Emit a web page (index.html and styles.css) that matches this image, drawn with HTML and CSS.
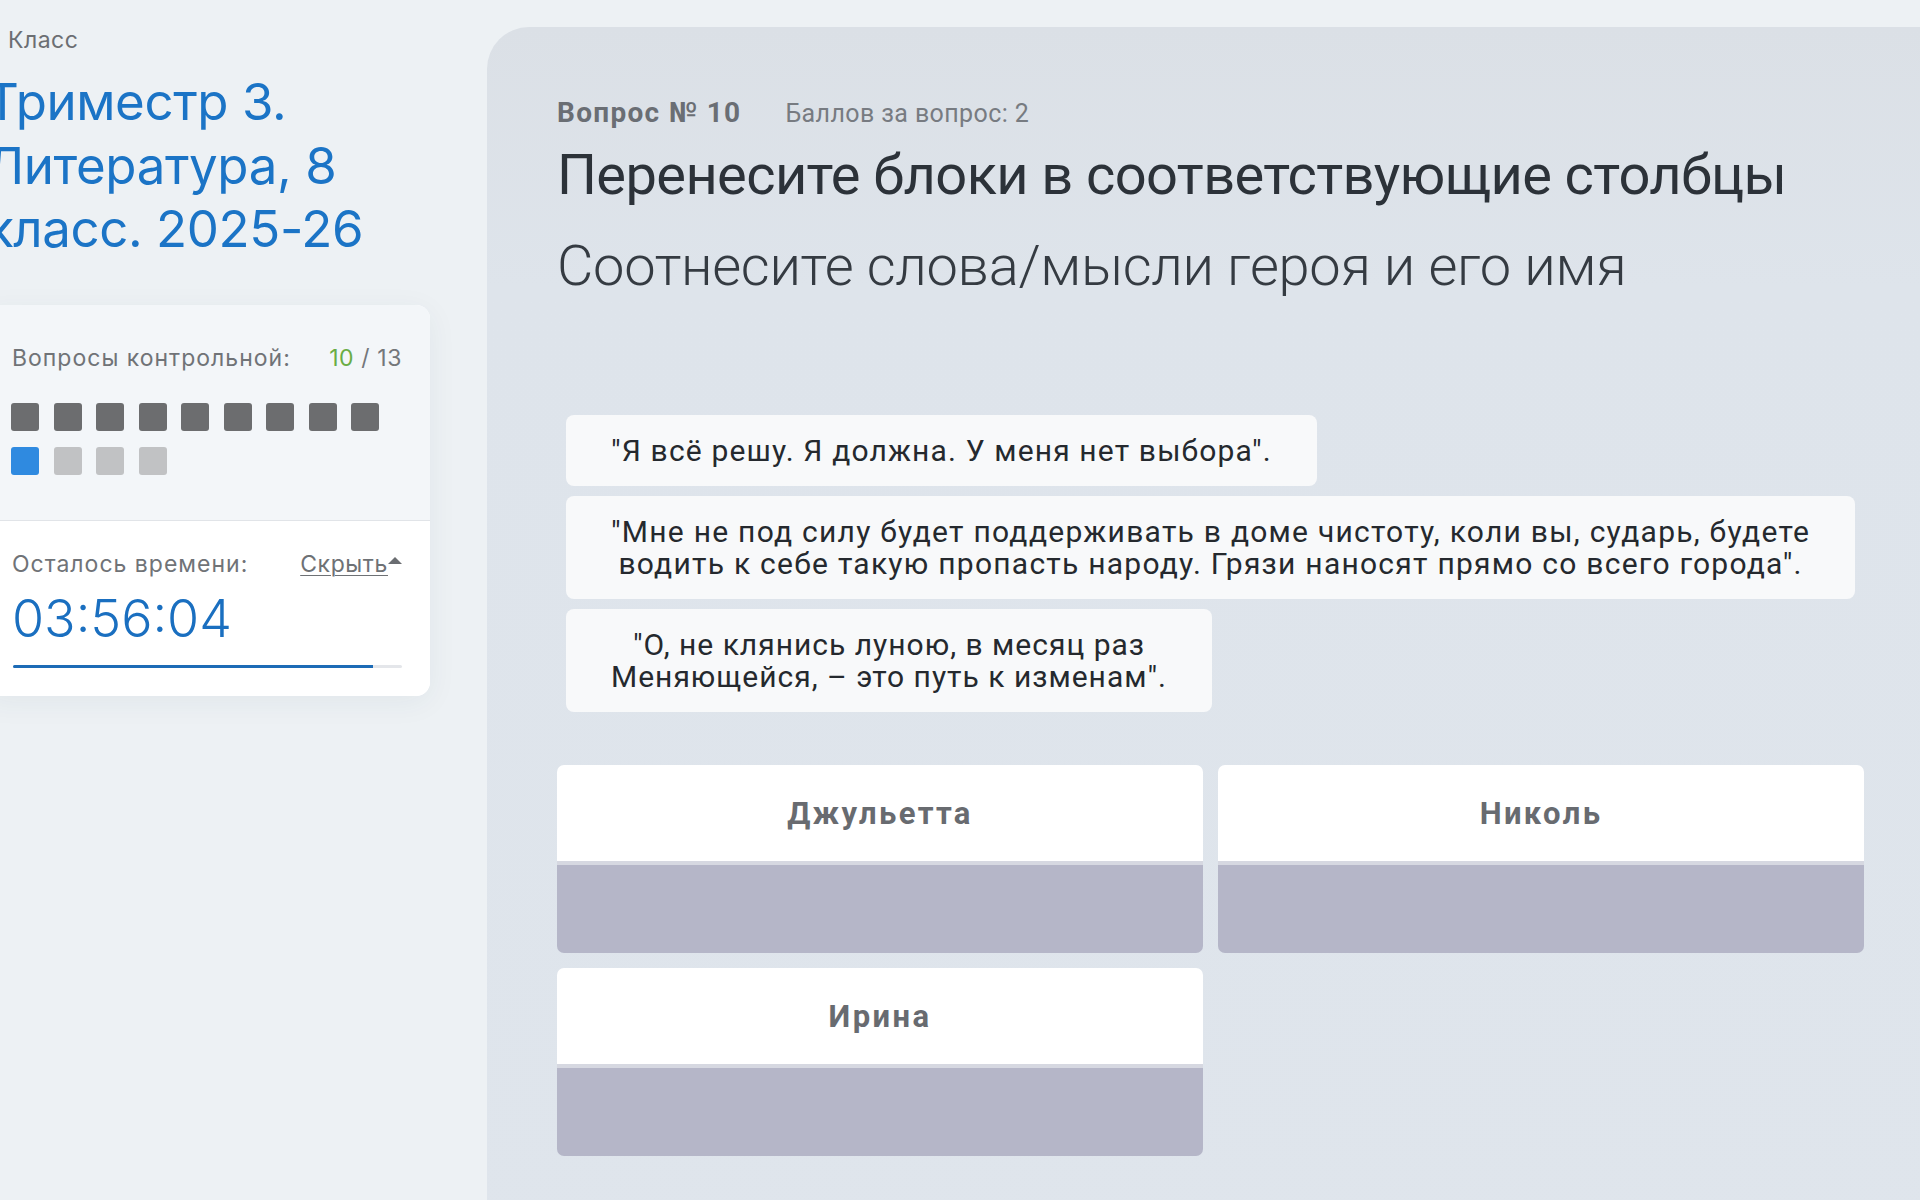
FILE: index.html
```html
<!DOCTYPE html>
<html lang="ru">
<head>
<meta charset="utf-8">
<title>Вопрос № 10</title>
<link rel="stylesheet" href="styles.css">
</head>
<body>
<div class="page">
  <aside class="sidebar">
    <div class="crumb">Класс</div>
    <h1 class="test-title">Триместр 3.<br>Литература, 8<br>класс. 2025-26</h1>
    <div class="side-card">
      <div class="side-top">
        <div class="side-row">
          <span>Вопросы контрольной:</span>
          <span class="counter"><span class="done">10</span> / 13</span>
        </div>
        <div class="squares">
          <span class="sq sq-done"></span><span class="sq sq-done"></span><span class="sq sq-done"></span>
          <span class="sq sq-done"></span><span class="sq sq-done"></span><span class="sq sq-done"></span>
          <span class="sq sq-done"></span><span class="sq sq-done"></span><span class="sq sq-done"></span>
          <span class="sq sq-current"></span><span class="sq sq-empty"></span><span class="sq sq-empty"></span>
          <span class="sq sq-empty"></span>
        </div>
      </div>
      <div class="side-bottom">
        <div class="side-row">
          <span>Осталось времени:</span>
          <span class="hide-link"><span class="hide-text">Скрыть</span><span class="caret"></span></span>
        </div>
        <div class="timer">03:56:04</div>
        <div class="progress"><div class="progress-fill" style="width: 92.5%"></div></div>
      </div>
    </div>
  </aside>

  <main class="panel">
    <div class="q-meta">
      <span class="q-num">Вопрос № 10</span>
      <span class="q-points">Баллов за вопрос: 2</span>
    </div>
    <h2 class="q-title">Перенесите блоки в соответствующие столбцы</h2>
    <p class="q-sub">Соотнесите слова/мысли героя и его имя</p>

    <div class="blocks">
      <div class="block">"Я всё решу. Я должна. У меня нет выбора".</div>
      <div class="block">"Мне не под силу будет поддерживать в доме чистоту, коли вы, сударь, будете<br>водить к себе такую пропасть народу. Грязи наносят прямо со всего города".</div>
      <div class="block">"О, не клянись луною, в месяц раз<br>Меняющейся, – это путь к изменам".</div>
    </div>

    <div class="columns">
      <div class="column">
        <div class="col-head">Джульетта</div>
        <div class="col-drop"></div>
      </div>
      <div class="column">
        <div class="col-head">Николь</div>
        <div class="col-drop"></div>
      </div>
      <div class="column">
        <div class="col-head">Ирина</div>
        <div class="col-drop"></div>
      </div>
    </div>
  </main>
</div>
</body>
</html>
```
FILE: styles.css
```css
html, body {
  margin: 0;
  padding: 0;
  width: 1920px;
  height: 1200px;
  overflow: hidden;
  background: #edf1f4;
}

body {
  font-family: Roboto, "Liberation Sans", sans-serif;
}

.page {
  display: flex;
  align-items: flex-start;
}

/* ---------- Sidebar ---------- */
.sidebar {
  flex: none;
  width: 444px;
  margin-left: -14px;
  padding-top: 26px;
  font-family: Inter, Roboto, sans-serif;
}

.crumb {
  padding-left: 22px;
  font-size: 23px;
  line-height: 28px;
  color: #6b6e72;
  letter-spacing: 0.5px;
}

.test-title {
  margin: 16px 0 0 0;
  font-size: 51px;
  line-height: 63.5px;
  font-weight: 400;
  color: #1b74c6;
  letter-spacing: -0.4px;
}

.side-card {
  margin-top: 44px;
  border-radius: 0 14px 14px 0;
  overflow: hidden;
  box-shadow: 0 6px 30px rgba(40, 60, 90, 0.06);
  background: #fff;
}

.side-top {
  background: #f3f6f9;
  padding: 38px 28px 45px 25px;
  border-bottom: 1px solid #e1e4e8;
}

.side-row {
  display: flex;
  justify-content: space-between;
  align-items: center;
  font-size: 23px;
  line-height: 30px;
  color: #707377;
  padding-left: 1px;
  letter-spacing: 1px;
}

.counter {
  color: #74777b;
  letter-spacing: 0.6px;
}

.counter .done {
  color: #6aad45;
}

.squares {
  margin-top: 30px;
  width: 368px;
  display: flex;
  flex-wrap: wrap;
  column-gap: 14.5px;
  row-gap: 16px;
}

.sq {
  width: 28px;
  height: 28px;
  border-radius: 3px;
}

.sq-done { background: #6c6d6f; }
.sq-current { background: #2f8ae0; }
.sq-empty { background: #c1c2c4; }

.side-bottom {
  background: #fff;
  padding: 28px 28px 28px 25px;
}

.hide-link {
  display: inline-flex;
  align-items: flex-start;
  color: #6e7175;
  letter-spacing: 0.6px;
}

.hide-text {
  text-decoration: underline;
  text-underline-offset: 3px;
  text-decoration-thickness: 1px;
}

.caret {
  width: 0;
  height: 0;
  margin-top: 8px;
  border-left: 7px solid transparent;
  border-right: 7px solid transparent;
  border-bottom: 7px solid #6a6d71;
}

.timer {
  margin-top: 8px;
  padding-left: 1px;
  font-size: 52px;
  line-height: 64px;
  font-weight: 300;
  color: #1a6fc0;
  letter-spacing: 0px;
}

.progress {
  margin-top: 14px;
  margin-left: 2px;
  height: 3px;
  background: #e4e6ea;
  border-radius: 2px;
  overflow: hidden;
}

.progress-fill {
  height: 100%;
  background: #1c6bb6;
}

/* ---------- Main panel ---------- */
.panel {
  flex: none;
  width: 1500px;
  min-height: 1300px;
  margin-left: 57px;
  margin-top: 27px;
  padding: 70px 0 0 70px;
  box-sizing: border-box;
  border-radius: 42px 0 0 0;
  background: linear-gradient(180deg, #dbe0e6 0px, #dee4eb 260px, #dfe5ec 100%);
  color: #2d333a;
}

.q-meta {
  display: flex;
  align-items: baseline;
  line-height: 32px;
}

.q-num {
  font-size: 28px;
  font-weight: 700;
  color: #6a6e74;
  letter-spacing: 1.3px;
}

.q-points {
  margin-left: 44px;
  font-size: 25px;
  color: #777b81;
  letter-spacing: 0.4px;
}

.q-title {
  margin: 12px 0 0 0;
  font-size: 56px;
  line-height: 66px;
  font-weight: 400;
  color: #2c3239;
  letter-spacing: -0.6px;
}

.q-sub {
  margin: 25px 0 0 0;
  font-size: 56px;
  line-height: 66px;
  font-weight: 300;
  color: #353b42;
  letter-spacing: -0.3px;
}

.blocks {
  margin-top: 116px;
  margin-left: 9px;
  display: flex;
  flex-direction: column;
  align-items: flex-start;
  gap: 10px;
}

.block {
  background: #f8f9fa;
  border-radius: 8px;
  padding: 20px 45px 19px 45px;
  font-size: 30px;
  line-height: 32px;
  color: #25292e;
  text-align: center;
  letter-spacing: 1.15px;
}

.block:nth-child(2) {
  letter-spacing: 1.25px;
}

.block:nth-child(3) {
  letter-spacing: 1px;
}

.columns {
  margin-top: 53px;
  width: 1307px;
  display: grid;
  grid-template-columns: 1fr 1fr;
  column-gap: 15px;
  row-gap: 15px;
}

.column {
  border-radius: 7px;
  overflow: hidden;
}

.col-head {
  height: 96px;
  background: #ffffff;
  display: flex;
  align-items: center;
  justify-content: center;
  font-size: 31px;
  font-weight: 700;
  color: #686b70;
  letter-spacing: 2.4px;
  border-bottom: 4px solid #d6d8e1;
}

.col-drop {
  height: 88px;
  background: #b5b6c8;
}
```
